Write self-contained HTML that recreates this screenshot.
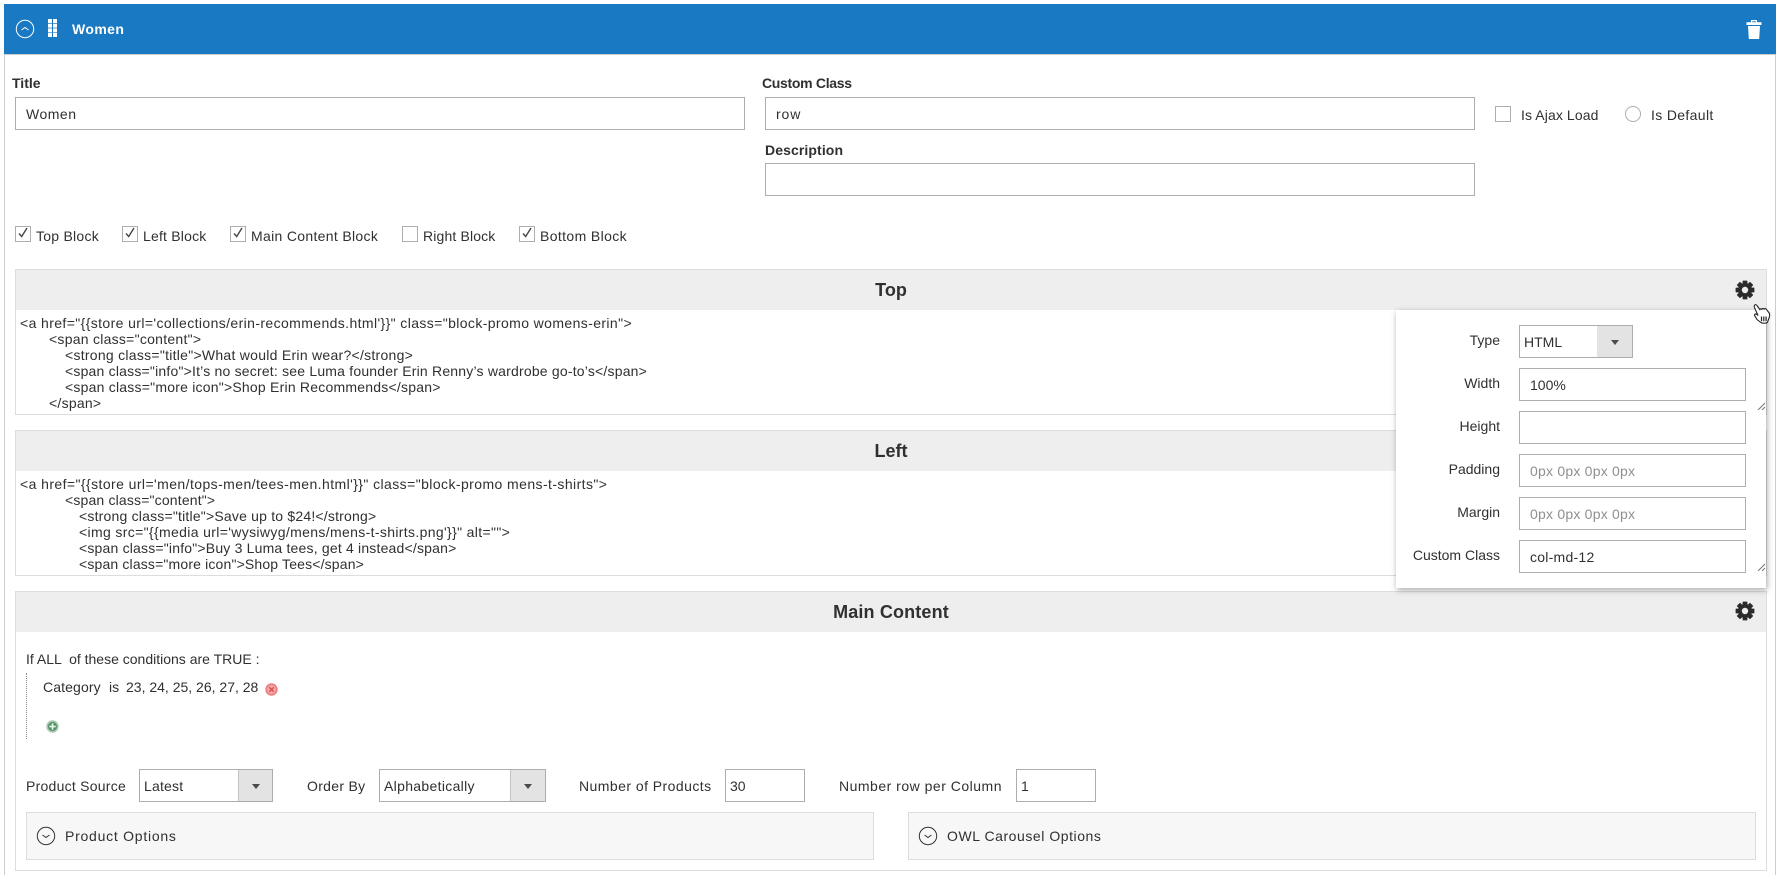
<!DOCTYPE html>
<html><head><meta charset="utf-8"><title>Women</title>
<style>
html,body{margin:0;padding:0;background:#fff;}
body{width:1781px;height:875px;position:relative;overflow:hidden;font-family:"Liberation Sans",Arial,sans-serif;font-size:14px;color:#303030;}
.a{position:absolute;box-sizing:border-box;}
.t{position:absolute;white-space:nowrap;line-height:20px;height:20px;}
.b{font-weight:bold;}
.in{position:absolute;box-sizing:border-box;border:1px solid #adadad;background:#fff;}
.cb{position:absolute;box-sizing:border-box;width:16px;height:16px;border:1px solid #adadad;background:#fff;}
.bar{position:absolute;box-sizing:border-box;background:#eee;}
.h{position:absolute;font-size:18px;font-weight:bold;line-height:24px;text-align:center;left:15px;width:1752px;color:#303030;}
.code{position:absolute;left:16px;width:1380px;overflow:hidden;font-size:14px;line-height:16px;color:#303030;}
.code div{position:absolute;white-space:nowrap;height:16px;}
.r{text-align:right;left:1396px;width:104px;}
.ph{color:#8f8f8f;letter-spacing:.22px;}
.arrow{position:absolute;box-sizing:border-box;background:#e3e3e3;border-left:1px solid #c4c4c4;}
.arrow:after{content:"";position:absolute;left:50%;top:50%;margin:-2px 0 0 -4px;border-left:4px solid transparent;border-right:4px solid transparent;border-top:5px solid #514943;}
</style></head><body>

<div class="a" style="left:4px;top:54px;width:1772px;height:821px;border-left:1px solid #ccc;border-right:1px solid #ccc;"></div>
<div class="a" style="left:4px;top:4px;width:1772px;height:50px;background:#1979c3;"></div>
<div class="a" style="left:4px;top:54px;width:1772px;height:1px;background:#ccc;"></div>

<svg class="a" style="left:15px;top:19px;" width="20" height="20" viewBox="0 0 20 20"><circle cx="10" cy="10" r="8.700" fill="none" stroke="#fff" stroke-width="1"/><path d="M6.500 11 10 8.500l3.500 2.500" fill="none" stroke="#fff" stroke-width="1"/></svg>
<svg class="a" style="left:48px;top:19px;" width="10" height="18" viewBox="0 0 10 18" fill="#fff"><rect x="0" y="0" width="4" height="4"/><rect x="5" y="0" width="4" height="4"/><rect x="0" y="4.700" width="4" height="4"/><rect x="5" y="4.700" width="4" height="4"/><rect x="0" y="9.400" width="4" height="4"/><rect x="5" y="9.400" width="4" height="4"/><rect x="0" y="14" width="4" height="4"/><rect x="5" y="14" width="4" height="4"/></svg>
<div class="t b" style="left:72px;top:19px;color:#fff;letter-spacing:.4px;">Women</div>
<svg class="a" style="left:1746px;top:19px;" width="16" height="21" viewBox="0 0 16 21" fill="#fff"><path d="M5 3.500V1h6v2.500h-1.200V2.200H6.200v1.300z"/><rect x="0.500" y="3.200" width="15" height="2.800"/><path d="M2 7h12l-.8 13H2.800z"/></svg>

<div class="t b" style="left:12px;top:73px;">Title</div>
<div class="in" style="left:15px;top:97px;width:730px;height:33px;"></div>
<div class="t" style="left:26px;top:104px;letter-spacing:.5px;">Women</div>
<div class="t b" style="left:762px;top:73px;letter-spacing:-.3px;">Custom Class</div>
<div class="in" style="left:765px;top:97px;width:710px;height:33px;"></div>
<div class="t" style="left:776px;top:104px;letter-spacing:.9px;">row</div>
<div class="t b" style="left:765px;top:140px;letter-spacing:.1px;">Description</div>
<div class="in" style="left:765px;top:163px;width:710px;height:33px;"></div>

<div class="cb" style="left:1495px;top:106px;"></div>
<div class="t" style="left:1521px;top:105px;letter-spacing:.1px;">Is Ajax Load</div>
<div class="a" style="left:1625px;top:106px;width:16px;height:16px;border:1px solid #adadad;border-radius:50%;"></div>
<div class="t" style="left:1651px;top:105px;letter-spacing:.35px;">Is Default</div>

<div class="cb" style="left:15px;top:226px;"></div>
<div class="cb" style="left:122px;top:226px;"></div>
<div class="cb" style="left:230px;top:226px;"></div>
<div class="cb" style="left:402px;top:226px;"></div>
<div class="cb" style="left:519px;top:226px;"></div>
<svg class="a" style="left:15px;top:226px;" width="16" height="14" viewBox="0 0 16 14"><path d="M4 7.500l2.700 3L12 2" fill="none" stroke="#444" stroke-width="1.400"/></svg>
<svg class="a" style="left:122px;top:226px;" width="16" height="14" viewBox="0 0 16 14"><path d="M4 7.500l2.700 3L12 2" fill="none" stroke="#444" stroke-width="1.400"/></svg>
<svg class="a" style="left:230px;top:226px;" width="16" height="14" viewBox="0 0 16 14"><path d="M4 7.500l2.700 3L12 2" fill="none" stroke="#444" stroke-width="1.400"/></svg>
<svg class="a" style="left:519px;top:226px;" width="16" height="14" viewBox="0 0 16 14"><path d="M4 7.500l2.700 3L12 2" fill="none" stroke="#444" stroke-width="1.400"/></svg>
<div class="t" style="left:36px;top:226px;letter-spacing:.25px;">Top Block</div>
<div class="t" style="left:143px;top:226px;letter-spacing:.2px;">Left Block</div>
<div class="t" style="left:251px;top:226px;letter-spacing:.32px;">Main Content Block</div>
<div class="t" style="left:423px;top:226px;letter-spacing:.15px;">Right Block</div>
<div class="t" style="left:540px;top:226px;letter-spacing:.38px;">Bottom Block</div>

<!-- Top -->
<div class="a" style="left:15px;top:269px;width:1752px;height:146px;border:1px solid #ddd;"></div>
<div class="bar" style="left:15px;top:269px;width:1752px;height:41px;border:1px solid #ddd;border-bottom:0;"></div>
<div class="h" style="top:278px;">Top</div>
<div class="code" style="top:310px;height:104px;">
<div style="left:4px;top:5px;letter-spacing:.39px;">&lt;a href="{{store url='collections/erin-recommends.html'}}" class="block-promo womens-erin"&gt;</div>
<div style="left:33px;top:21px;letter-spacing:.26px;">&lt;span class="content"&gt;</div>
<div style="left:49px;top:37px;letter-spacing:.27px;">&lt;strong class="title"&gt;What would Erin wear?&lt;/strong&gt;</div>
<div style="left:49px;top:53px;letter-spacing:.2px;">&lt;span class="info"&gt;It’s no secret: see Luma founder Erin Renny’s wardrobe go-to’s&lt;/span&gt;</div>
<div style="left:49px;top:69px;letter-spacing:.22px;">&lt;span class="more icon"&gt;Shop Erin Recommends&lt;/span&gt;</div>
<div style="left:33px;top:85px;letter-spacing:.25px;">&lt;/span&gt;</div>
</div>

<!-- Left -->
<div class="a" style="left:15px;top:430px;width:1752px;height:146px;border:1px solid #ddd;"></div>
<div class="bar" style="left:15px;top:430px;width:1752px;height:41px;border:1px solid #ddd;border-bottom:0;"></div>
<div class="h" style="top:439px;">Left</div>
<div class="code" style="top:471px;height:104px;">
<div style="left:4px;top:5px;letter-spacing:.42px;">&lt;a href="{{store url='men/tops-men/tees-men.html'}}" class="block-promo mens-t-shirts"&gt;</div>
<div style="left:49px;top:21px;letter-spacing:.17px;">&lt;span class="content"&gt;</div>
<div style="left:63px;top:37px;letter-spacing:.2px;">&lt;strong class="title"&gt;Save up to $24!&lt;/strong&gt;</div>
<div style="left:63px;top:53px;letter-spacing:.35px;">&lt;img src="{{media url='wysiwyg/mens/mens-t-shirts.png'}}" alt=""&gt;</div>
<div style="left:63px;top:69px;letter-spacing:.19px;">&lt;span class="info"&gt;Buy 3 Luma tees, get 4 instead&lt;/span&gt;</div>
<div style="left:63px;top:85px;letter-spacing:.16px;">&lt;span class="more icon"&gt;Shop Tees&lt;/span&gt;</div>
</div>

<!-- Main -->
<div class="a" style="left:15px;top:591px;width:1752px;height:280px;border:1px solid #ddd;"></div>
<div class="bar" style="left:15px;top:591px;width:1752px;height:41px;border:1px solid #ddd;border-bottom:0;"></div>
<div class="h" style="top:600px;letter-spacing:.15px;">Main Content</div>

<svg class="a" style="left:1735px;top:280px;" width="20" height="20" viewBox="-10 -10 20 20"><g fill="#2b2b2b"><rect x="-2.400" y="-9.400" width="4.800" height="18.800" rx=".6"/><rect x="-2.400" y="-9.400" width="4.800" height="18.800" rx=".6" transform="rotate(45)"/><rect x="-2.400" y="-9.400" width="4.800" height="18.800" rx=".6" transform="rotate(90)"/><rect x="-2.400" y="-9.400" width="4.800" height="18.800" rx=".6" transform="rotate(135)"/><circle r="7"/></g><circle r="3.200" fill="#eee"/></svg>
<svg class="a" style="left:1735px;top:601px;" width="20" height="20" viewBox="-10 -10 20 20"><g fill="#2b2b2b"><rect x="-2.400" y="-9.400" width="4.800" height="18.800" rx=".6"/><rect x="-2.400" y="-9.400" width="4.800" height="18.800" rx=".6" transform="rotate(45)"/><rect x="-2.400" y="-9.400" width="4.800" height="18.800" rx=".6" transform="rotate(90)"/><rect x="-2.400" y="-9.400" width="4.800" height="18.800" rx=".6" transform="rotate(135)"/><circle r="7"/></g><circle r="3.200" fill="#eee"/></svg>

<div class="t" style="left:26px;top:649px;">If ALL &nbsp;of these conditions are TRUE :</div>
<div class="a" style="left:26px;top:673px;width:0;height:66px;border-left:1px dotted #888;"></div>
<div class="t" style="left:43px;top:677px;letter-spacing:.12px;">Category</div>
<div class="t" style="left:109px;top:677px;">is</div>
<div class="t" style="left:126px;top:677px;">23, 24, 25, 26, 27, 28</div>
<svg class="a" style="left:265px;top:683px;" width="13" height="13" viewBox="0 0 13 13"><circle cx="6.500" cy="6.500" r="6.200" fill="#ec7f7f"/><circle cx="6.500" cy="6.500" r="4.500" fill="#f4a5a5"/><path d="M4.300 4.300l4.400 4.400M8.700 4.300L4.300 8.700" stroke="#d24a4a" stroke-width="1.300"/></svg>
<svg class="a" style="left:46px;top:720px;" width="13" height="13" viewBox="0 0 13 13"><circle cx="6.500" cy="6.500" r="6.200" fill="#a8c8b1"/><circle cx="6.500" cy="6.500" r="4.500" fill="#4f8f65"/><path d="M6.500 3.300v6.400M3.300 6.500h6.400" stroke="#e8f3ea" stroke-width="1.700"/></svg>

<div class="t" style="left:26px;top:776px;letter-spacing:.25px;">Product Source</div>
<div class="in" style="left:139px;top:769px;width:134px;height:33px;"></div>
<div class="arrow" style="left:238px;top:770px;width:34px;height:31px;"></div>
<div class="t" style="left:144px;top:776px;letter-spacing:.2px;">Latest</div>
<div class="t" style="left:307px;top:776px;letter-spacing:.3px;">Order By</div>
<div class="in" style="left:379px;top:769px;width:167px;height:33px;"></div>
<div class="arrow" style="left:510px;top:770px;width:35px;height:31px;"></div>
<div class="t" style="left:384px;top:776px;letter-spacing:.32px;">Alphabetically</div>
<div class="t" style="left:579px;top:776px;letter-spacing:.45px;">Number of Products</div>
<div class="in" style="left:725px;top:769px;width:80px;height:33px;"></div>
<div class="t" style="left:730px;top:776px;">30</div>
<div class="t" style="left:839px;top:776px;letter-spacing:.5px;">Number row per Column</div>
<div class="in" style="left:1016px;top:769px;width:80px;height:33px;"></div>
<div class="t" style="left:1021px;top:776px;">1</div>

<div class="a" style="left:26px;top:812px;width:848px;height:48px;background:#f7f7f7;border:1px solid #ddd;"></div>
<svg class="a" style="left:36px;top:826px;" width="20" height="20" viewBox="0 0 20 20"><circle cx="10" cy="10" r="8.700" fill="none" stroke="#333" stroke-width="1"/><path d="M6.500 9 10 11.500l3.500-2.500" fill="none" stroke="#333" stroke-width="1"/></svg>
<div class="t" style="left:65px;top:826px;letter-spacing:.75px;">Product Options</div>
<div class="a" style="left:908px;top:812px;width:848px;height:48px;background:#f7f7f7;border:1px solid #ddd;"></div>
<svg class="a" style="left:918px;top:826px;" width="20" height="20" viewBox="0 0 20 20"><circle cx="10" cy="10" r="8.700" fill="none" stroke="#333" stroke-width="1"/><path d="M6.500 9 10 11.500l3.500-2.500" fill="none" stroke="#333" stroke-width="1"/></svg>
<div class="t" style="left:947px;top:826px;letter-spacing:.55px;">OWL Carousel Options</div>

<!-- Popup -->
<div class="a" style="left:1396px;top:310px;width:370px;height:278px;background:#fff;box-shadow:1px 2px 6px rgba(0,0,0,.35);"></div>
<div class="t r" style="top:330px;">Type</div>
<div class="t r" style="top:373px;">Width</div>
<div class="t r" style="top:416px;">Height</div>
<div class="t r" style="top:459px;">Padding</div>
<div class="t r" style="top:502px;">Margin</div>
<div class="t r" style="top:545px;">Custom Class</div>
<div class="in" style="left:1519px;top:325px;width:114px;height:33px;"></div>
<div class="arrow" style="left:1597px;top:326px;width:35px;height:31px;border-left:0;"></div>
<div class="t" style="left:1524px;top:332px;">HTML</div>
<div class="in" style="left:1519px;top:368px;width:227px;height:33px;"></div>
<div class="t" style="left:1530px;top:375px;">100%</div>
<div class="in" style="left:1519px;top:411px;width:227px;height:33px;"></div>
<div class="in" style="left:1519px;top:454px;width:227px;height:33px;"></div>
<div class="t ph" style="left:1530px;top:461px;">0px 0px 0px 0px</div>
<div class="in" style="left:1519px;top:497px;width:227px;height:33px;"></div>
<div class="t ph" style="left:1530px;top:504px;">0px 0px 0px 0px</div>
<div class="in" style="left:1519px;top:540px;width:227px;height:33px;"></div>
<div class="t" style="left:1530px;top:547px;letter-spacing:.25px;">col-md-12</div>
<svg class="a" style="left:1757px;top:402px;" width="9" height="8" viewBox="0 0 9 8"><path d="M1 8 8 1M5 8l3-3" stroke="#777" stroke-width="1" fill="none"/></svg>
<svg class="a" style="left:1757px;top:563px;" width="9" height="8" viewBox="0 0 9 8"><path d="M1 8 8 1M5 8l3-3" stroke="#777" stroke-width="1" fill="none"/></svg>

<svg class="a" style="left:1752px;top:303px;" width="20" height="22" viewBox="0 0 20 22"><path d="M2.500 2.200c.7-.9 1.800-.7 2.400.3l3 4.200c.2-1 1.400-1.200 2-.3.3-1 1.600-1.100 2.100-.2.400-.8 1.700-.8 2.200 0l3 3.800c.6 1.400.5 3.600-.3 5.200l-1.500 4.300c-1.700 1-4.800 1-6.600 0L5 16.500 2.800 12.800c-.7-1.300.6-2.400 1.800-1.500l1.300 1L2.400 4.300c-.3-.8-.3-1.500.1-2.100z" fill="#fff" stroke="#222" stroke-width="1.100" stroke-linejoin="round"/><path d="M9.500 13.500v4.800M11.800 13.500v4.800M14.100 13.500v4.800" stroke="#222" stroke-width="1.200"/></svg>

</body></html>
